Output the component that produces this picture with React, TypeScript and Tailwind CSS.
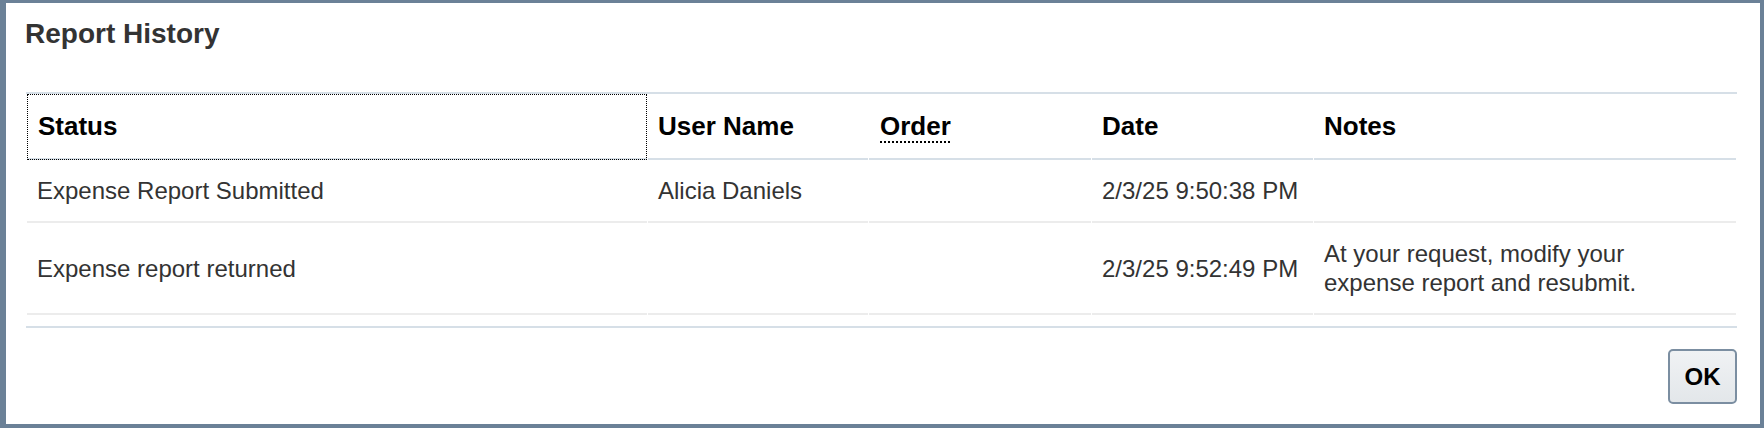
import React from "react";

type Row = {
  status: string;
  user: string;
  order: string;
  date: string;
  notes: string;
};

const rows: Row[] = [
  {
    status: "Expense Report Submitted",
    user: "Alicia Daniels",
    order: "",
    date: "2/3/25 9:50:38 PM",
    notes: "",
  },
  {
    status: "Expense report returned",
    user: "",
    order: "",
    date: "2/3/25 9:52:49 PM",
    notes: "At your request, modify your expense report and resubmit.",
  },
];

function ReportHistory() {
  return (
    <div className="w-[1764px] h-[428px] bg-white border-[#6b8197] border-l-[6px] border-t-[3px] border-r-[4px] border-b-[4px] flex flex-col font-['Liberation_Sans',Arial,sans-serif]">
      <h1 className="pl-[19px] pt-[16px] text-[28px] leading-[30px] font-bold text-[#333]">
        Report History
      </h1>

      {/* history table */}
      <div className="mt-[43px] ml-[20px] mr-[23px] border-t-2 border-b-2 border-[#d6dfe7] pb-[11px]">
        <table className="w-full table-fixed border-separate border-spacing-x-[1px] border-spacing-y-0 text-left">
          <colgroup>
            <col className="w-[620px]" />
            <col className="w-[220px]" />
            <col className="w-[222px]" />
            <col className="w-[221px]" />
            <col />
          </colgroup>
          <thead>
            <tr className="text-[26px] leading-[30px] font-bold text-black">
              <th className="pl-[11px] py-[17px] border-b-2 border-[#d6dfe7] outline outline-dotted outline-black -outline-offset-1">
                Status
              </th>
              <th className="pl-[10px] py-[17px] border-b-2 border-[#d6dfe7]">User Name</th>
              <th className="pl-[11px] py-[17px] border-b-2 border-[#d6dfe7]">
                <span className="underline decoration-dotted decoration-2 underline-offset-[6px]">
                  Order
                </span>
              </th>
              <th className="pl-[10px] py-[17px] border-b-2 border-[#d6dfe7]">Date</th>
              <th className="pl-[10px] py-[17px] border-b-2 border-[#d6dfe7]">Notes</th>
            </tr>
          </thead>
          <tbody>
            {rows.map((r) => (
              <tr key={r.date} className="text-[24px] leading-[29px] text-[#333]">
                <td className="pl-[10px] py-[16px] border-b-2 border-[#ececec] align-middle">{r.status}</td>
                <td className="pl-[10px] py-[16px] border-b-2 border-[#ececec] align-middle">{r.user}</td>
                <td className="pl-[11px] py-[16px] border-b-2 border-[#ececec] align-middle">{r.order}</td>
                <td className="pl-[10px] py-[16px] border-b-2 border-[#ececec] align-middle whitespace-nowrap">
                  {r.date}
                </td>
                <td className="pl-[10px] py-[16px] border-b-2 border-[#ececec] align-middle">
                  <div className="max-w-[330px]">{r.notes}</div>
                </td>
              </tr>
            ))}
          </tbody>
        </table>
      </div>

      <div className="flex justify-end mt-[21px] mr-[23px]">
        <button className="w-[69px] h-[55px] rounded-[5px] border-2 border-[#7b8ea1] bg-linear-to-b from-[#f0f2f4] to-[#e3e7ea] text-[24px] font-bold text-black">
          OK
        </button>
      </div>
    </div>
  );
}

export default function App() {
  return <ReportHistory />;
}
